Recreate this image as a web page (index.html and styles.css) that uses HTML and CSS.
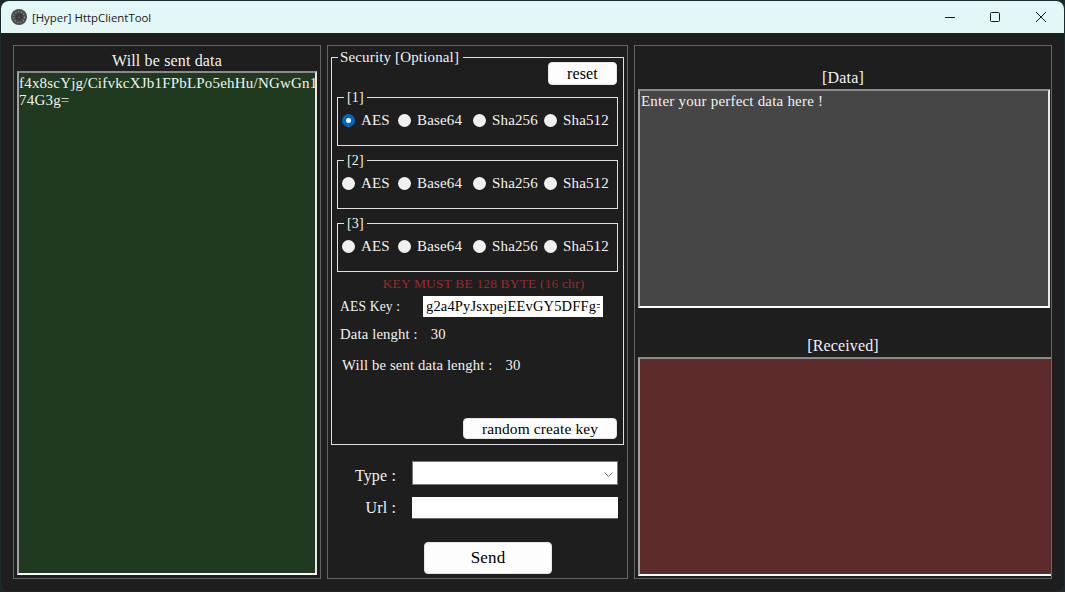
FILE: index.html
```html
<!DOCTYPE html>
<html lang="en">
<head>
  <meta charset="UTF-8" />
  <title>[Hyper] HttpClientTool</title>
  <link rel="stylesheet" href="styles.css">
</head>
<body>
  <div class="window">
    <div class="titlebar">
      <svg class="app-icon" width="16" height="16" viewBox="0 0 16 16">
        <circle cx="8" cy="8" r="8" fill="#4a4a4a"/>
        <circle cx="8" cy="8" r="5.5" fill="none" stroke="#8a8a8a" stroke-width="1.2" stroke-dasharray="1.5 1.5"/>
        <circle cx="8" cy="8" r="2.5" fill="none" stroke="#2a2a2a" stroke-width="1.4" stroke-dasharray="1.5 1"/>
      </svg>
      <span class="app-name">[Hyper] HttpClientTool</span>
      <div class="win-buttons">
        <svg width="10" height="10" viewBox="0 0 10 10"><path d="M0 5.5H10" stroke="#1a1a1a" fill="none"/></svg>
        <svg width="10" height="10" viewBox="0 0 10 10"><rect x="0.5" y="0.5" width="9" height="9" rx="1" stroke="#1a1a1a" fill="none"/></svg>
        <svg class="win-close" width="10" height="10" viewBox="0 0 10 10"><path d="M0 0L10 10M10 0L0 10" stroke="#1a1a1a" fill="none"/></svg>
      </div>
    </div>

    <div class="content">
      <section class="panel panel-left">
        <div class="panel-title">Will be sent data</div>
        <textarea class="box box-green" wrap="off">f4x8scYjg/CifvkcXJb1FPbLPo5ehHu/NGwGn1
74G3g=</textarea>
      </section>

      <section class="panel panel-mid">
        <fieldset class="security">
          <legend>Security [Optional]</legend>
          <div class="reset-row"><button class="btn btn-reset">reset</button></div>

          <fieldset class="algo">
            <legend>[1]</legend>
            <div class="radios">
              <label class="r-aes"><input type="radio" name="a1" checked>AES</label>
              <label class="r-b64"><input type="radio" name="a1">Base64</label>
              <label class="r-256"><input type="radio" name="a1">Sha256</label>
              <label><input type="radio" name="a1">Sha512</label>
            </div>
          </fieldset>
          <fieldset class="algo">
            <legend>[2]</legend>
            <div class="radios">
              <label class="r-aes"><input type="radio" name="a2">AES</label>
              <label class="r-b64"><input type="radio" name="a2">Base64</label>
              <label class="r-256"><input type="radio" name="a2">Sha256</label>
              <label><input type="radio" name="a2">Sha512</label>
            </div>
          </fieldset>
          <fieldset class="algo">
            <legend>[3]</legend>
            <div class="radios">
              <label class="r-aes"><input type="radio" name="a3">AES</label>
              <label class="r-b64"><input type="radio" name="a3">Base64</label>
              <label class="r-256"><input type="radio" name="a3">Sha256</label>
              <label><input type="radio" name="a3">Sha512</label>
            </div>
          </fieldset>

          <div class="key-warning">KEY MUST BE 128 BYTE (16 chr)</div>
          <div class="key-row">
            <span class="key-label">AES Key :</span>
            <input class="key-input" type="text" value="g2a4PyJsxpejEEvGY5DFFg==">
          </div>
          <div class="len-row"><span class="len-label">Data lenght :</span><span>30</span></div>
          <div class="len-row len-sent"><span class="len-label">Will be sent data lenght :</span><span>30</span></div>
          <div class="random-row"><button class="btn btn-random">random create key</button></div>
        </fieldset>

        <div class="form-row form-type">
          <span class="form-label">Type :</span>
          <div class="select-wrap">
            <select class="form-select"><option></option></select>
            <svg class="select-arrow" width="9" height="5" viewBox="0 0 9 5"><path d="M0.5 0.5L4.5 4.5L8.5 0.5" stroke="#666" fill="none"/></svg>
          </div>
        </div>
        <div class="form-row form-url">
          <span class="form-label">Url :</span>
          <input class="form-input" type="text">
        </div>
        <div class="send-row"><button class="btn btn-send">Send</button></div>
      </section>

      <section class="panel panel-right">
        <div class="panel-title title-data">[Data]</div>
        <textarea class="box box-grey" wrap="off">Enter your perfect data here !</textarea>
        <div class="panel-title title-received">[Received]</div>
        <textarea class="box box-red" wrap="off"></textarea>
      </section>
    </div>
  </div>
</body>
</html>
```

FILE: styles.css
```css
html, body {
  margin: 0;
  height: 100%;
  overflow: hidden;
  background: #1b2a2e;
}

body {
  padding: 1px;
  box-sizing: border-box;
  font-family: "Liberation Serif", serif;
  font-size: 16px;
  letter-spacing: 0.15px;
  color: #f2f2f2;
}

.window {
  height: 590px;
  background: #1e1e1e;
  border-radius: 8px;
  overflow: hidden;
}

.titlebar {
  height: 32px;
  background: #e3f7f7;
  display: flex;
  align-items: center;
  padding-left: 10px;
  color: #1a1a1a;
}

.app-name {
  font-family: "Open Sans", sans-serif;
  font-size: 11.4px;
  letter-spacing: 0;
  margin-left: 5px;
}

.win-buttons {
  margin-left: auto;
  display: flex;
  gap: 35px;
  padding-right: 18px;
}

.win-close { margin-left: 1px; }

.content {
  display: flex;
  padding: 12px 0 0 12px;
  gap: 6px;
}

.panel {
  border: 1px solid #666;
  height: 534px;
  box-sizing: border-box;
  display: flex;
  flex-direction: column;
  padding: 0 3px;
}

.panel-left { width: 308px; }
.panel-mid { width: 301px; }
.panel-right { width: 418px; }

.panel-title {
  text-align: center;
  line-height: 18px;
  margin-top: 6px;
  margin-bottom: 1px;
}

.box {
  display: block;
  box-sizing: border-box;
  margin: 0;
  padding: 2px 0 0 1px;
  width: 100%;
  font: inherit;
  font-size: 15px;
  letter-spacing: 0.2px;
  color: #f2f2f2;
  line-height: 17px;
  resize: none;
  overflow: hidden;
  outline: none;
  border: 2px solid;
  border-color: #8a8a8a #e8e8e8 #fff #a0a0a0;
  border-radius: 0;
}

.box-green { height: 504px; padding-left: 0; background: #203a20; }
.box-grey { height: 219px; width: 412px; background: #464646; }
.box-red { height: 219px; width: 413px; background: #5e2b2b; border-right: 0; }

.title-data { margin-top: 23px; margin-bottom: 2px; }
.title-received { margin-top: 29px; margin-bottom: 2px; }

fieldset {
  margin: 0;
  min-width: 0;
  border: 1px solid #e0e0e0;
}

legend { padding: 0 3px; line-height: 16px; }

.security {
  height: 396px;
  box-sizing: border-box;
  margin-top: 3px;
  padding: 0 5px;
}

.security > legend { margin-left: 1px; padding: 0 4px 0 2px; font-size: 15px; }

.reset-row {
  display: flex;
  justify-content: flex-end;
  height: 23px;
  margin-right: 1px;
}

.btn {
  font: inherit;
  letter-spacing: inherit;
  color: #000;
  background: #fdfdfd;
  border: 1px solid #e4e4e4;
  border-radius: 4px;
  padding: 0;
}

.btn-reset { width: 69px; height: 23px; margin-top: -3px; }

.algo {
  height: 58px;
  box-sizing: border-box;
  padding: 0 4px;
  margin-top: 5px;
}

.reset-row + .algo { margin-top: 0; }

.algo > legend { margin-left: 2px; padding-top: 2px; font-size: 14px; }

.radios {
  display: flex;
  margin-top: 6px;
  font-size: 15px;
}

.radios label { display: flex; align-items: center; }
.r-aes { width: 56px; }
.r-b64 { width: 75px; }
.r-256 { width: 71px; }

.radios input {
  appearance: none;
  margin: 0 6px 0 0;
  width: 13px;
  height: 13px;
  border-radius: 50%;
  background: #f0f0f0;
  box-sizing: border-box;
}

.radios input:checked {
  background: #fff;
  border: 4px solid #0067c0;
}

.key-warning {
  text-align: center;
  color: #9a2a2c;
  font-size: 13.5px;
  margin-top: 4px;
  padding-left: 12px;
  line-height: 16px;
}

.key-row {
  display: flex;
  align-items: center;
  margin-top: 4px;
  padding-left: 3px;
}

.key-label { width: 83px; font-size: 13.6px; }

.key-input {
  box-sizing: border-box;
  width: 180px;
  height: 21px;
  border: 0;
  padding: 0 3px;
  background: #fff;
  color: #000;
  font: inherit;
  font-size: 14.5px;
  letter-spacing: 0.15px;
}

.len-row {
  display: flex;
  padding-left: 3px;
  margin-top: 8px;
  line-height: 18px;
  font-size: 14.7px;
}

.len-label { margin-right: 13px; }
.len-sent { margin-top: 13px; padding-left: 5px; }

.random-row {
  display: flex;
  justify-content: flex-end;
  margin-top: 44px;
  margin-right: 1px;
}

.btn-random { width: 154px; height: 21px; font-size: 15.4px; }

.form-row { display: flex; align-items: center; }
.form-type { margin-top: 16px; height: 24px; }
.form-url { margin-top: 12px; }

.form-label {
  width: 65px;
  margin-right: 16px;
  text-align: right;
  font-size: 16px;
}

.form-type .form-label { padding-top: 6px; }

.select-wrap { position: relative; display: flex; }

.select-arrow {
  position: absolute;
  right: 5px;
  top: 11px;
  pointer-events: none;
}

.form-select {
  appearance: none;
  box-sizing: border-box;
  width: 206px;
  height: 24px;
  background: #fff;
  border: 1px solid #777;
  border-radius: 0;
  font: inherit;
}

.form-input {
  box-sizing: border-box;
  width: 206px;
  height: 22px;
  background: #fff;
  border: 0;
  border-bottom: 1px solid #666;
  padding: 0;
}

.send-row { display: flex; padding-left: 93px; margin-top: 23px; }
.btn-send { width: 128px; height: 32px; font-size: 17px; }
```
